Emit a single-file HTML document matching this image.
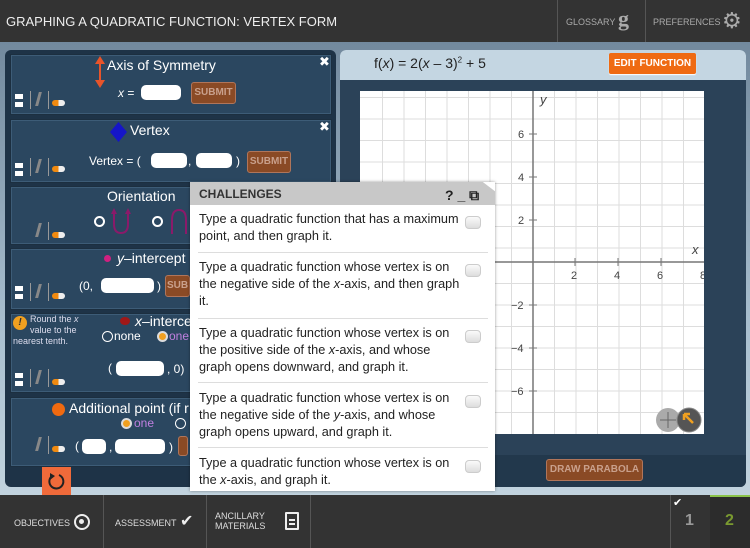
<!DOCTYPE html>
<html><head><meta charset="utf-8"><style>
*{margin:0;padding:0;box-sizing:border-box}
body{width:750px;height:548px;overflow:hidden;font-family:"Liberation Sans",sans-serif;background:linear-gradient(#6a8196,#a9bfcf 60%,#c9d9e3);position:relative}
.abs{position:absolute}
.hdr{left:0;top:0;width:750px;height:42px;background:#333;color:#ddd}
.ft{left:0;top:495px;width:750px;height:53px;background:#333;color:#ddd}
.sec{background:#2b4760;border:1px solid #1c2f40;box-shadow:inset 0 0 0 1px #3d5c77}
.w{color:#fff}
.inp{background:#fff;border-radius:5px;height:15px}
.sub{background:#8a4a25;border:1px solid #b0755a;color:#c9a08c;font-size:10px;font-weight:bold;text-align:center;border-radius:3px}
.ch{font-size:12.7px;color:#222;line-height:17px;left:199px;white-space:nowrap}
.cb{width:16px;height:13px;border-radius:4px;background:linear-gradient(#fafafa,#ddd);border:1px solid #ccc;left:465px}
.sep{left:198px;width:290px;height:1px;background:#ddd}
</style></head><body>
<div class="abs hdr"><div class="abs" style="left:6px;top:14px;font-size:13px;color:#eee">GRAPHING A QUADRATIC FUNCTION: VERTEX FORM</div>
<div class="abs" style="left:557px;top:0;width:1px;height:42px;background:#555"></div>
<div class="abs" style="left:645px;top:0;width:1px;height:42px;background:#555"></div>
<div class="abs" style="left:566px;top:17px;font-size:9px;color:#aaa">GLOSSARY</div>
<div class="abs" style="left:618px;top:6px;font-size:22px;color:#aaa;font-family:'Liberation Serif',serif;font-weight:bold">g</div>
<div class="abs" style="left:653px;top:17px;font-size:9px;color:#aaa">PREFERENCES</div>
<div class="abs" style="left:722px;top:8px;font-size:22px;color:#aaa">⚙</div>
</div>

<div class="abs" style="left:5px;top:50px;width:331px;height:437px;background:#1e3347;border-radius:6px"></div>
<div class="abs sec" style="left:10px;top:54px;width:322px;height:61px"></div>
<div class="abs sec" style="left:10px;top:119px;width:322px;height:64px"></div>
<div class="abs sec" style="left:10px;top:186px;width:322px;height:59px"></div>
<div class="abs sec" style="left:10px;top:248px;width:322px;height:62px"></div>
<div class="abs sec" style="left:10px;top:313px;width:322px;height:80px"></div>
<div class="abs sec" style="left:10px;top:397px;width:322px;height:70px"></div>

<svg class="abs" style="left:94px;top:54px" width="12" height="36"><path d="M6 4V32" stroke="#e8542a" stroke-width="2"/><path d="M1 10L6 2L11 10ZM1 26L6 34L11 26Z" fill="#e8542a"/></svg>
<div class="abs w" style="left:107px;top:57px;font-size:14px">Axis of Symmetry</div>
<div class="abs w" style="left:319px;top:54px;font-size:13px">✖</div>
<div class="abs w" style="left:118px;top:86px;font-size:12px"><i>x</i> =</div>
<div class="abs inp" style="left:141px;top:85px;width:40px"></div>
<div class="abs sub" style="left:191px;top:82px;width:45px;height:22px;line-height:20px">SUBMIT</div>

<div class="abs" style="left:110px;top:122px;width:17px;height:20px;background:#1515c8;clip-path:polygon(50% 0,100% 50%,50% 100%,0 50%)"></div>
<div class="abs w" style="left:130px;top:122px;font-size:14px">Vertex</div>
<div class="abs w" style="left:319px;top:119px;font-size:13px">✖</div>
<div class="abs w" style="left:89px;top:154px;font-size:12px">Vertex = (</div>
<div class="abs inp" style="left:151px;top:153px;width:36px"></div>
<div class="abs w" style="left:188px;top:154px;font-size:12px">,</div>
<div class="abs inp" style="left:196px;top:153px;width:36px"></div>
<div class="abs w" style="left:236px;top:154px;font-size:12px">)</div>
<div class="abs sub" style="left:247px;top:151px;width:44px;height:22px;line-height:20px">SUBMIT</div>

<div class="abs w" style="left:107px;top:188px;font-size:14px">Orientation</div>
<div class="abs" style="left:94px;top:216px;width:11px;height:11px;border-radius:50%;border:2px solid #fff"></div>
<svg class="abs" style="left:110px;top:206px" width="22" height="30"><path d="M4 4V18Q4 27 11 27Q18 27 18 18V4" fill="none" stroke="#8a1a6a" stroke-width="2"/><path d="M1 8L4 2L7 8ZM15 8L18 2L21 8Z" fill="#8a1a6a"/></svg>
<div class="abs" style="left:152px;top:216px;width:11px;height:11px;border-radius:50%;border:2px solid #fff"></div>
<svg class="abs" style="left:168px;top:206px" width="22" height="30"><path d="M4 28V14Q4 4 11 4Q18 4 18 14V28" fill="none" stroke="#8a1a6a" stroke-width="2"/></svg>

<div class="abs" style="left:104px;top:255px;width:7px;height:7px;border-radius:50%;background:#d02080"></div>
<div class="abs w" style="left:117px;top:250px;font-size:14px"><i>y</i>–intercept</div>
<div class="abs w" style="left:79px;top:279px;font-size:12px">(0,</div>
<div class="abs inp" style="left:101px;top:278px;width:53px"></div>
<div class="abs w" style="left:157px;top:279px;font-size:12px">)</div>
<div class="abs sub" style="left:165px;top:275px;width:25px;height:22px;line-height:20px">SUB</div>

<div class="abs" style="left:13px;top:316px;width:14px;height:14px;border-radius:50%;background:#f0a020;color:#333;font-size:10px;font-weight:bold;text-align:center;line-height:14px"><i>!</i></div>
<div class="abs" style="left:30px;top:314px;font-size:9px;line-height:11px;color:#dde">Round the <i>x</i></div>
<div class="abs" style="left:30px;top:325px;font-size:9px;line-height:11px;color:#dde">value to the</div>
<div class="abs" style="left:13px;top:336px;font-size:9px;line-height:11px;color:#dde">nearest tenth.</div>
<div class="abs" style="left:120px;top:317px;width:10px;height:8px;border-radius:50%;background:#a01818"></div>
<div class="abs w" style="left:135px;top:313px;font-size:14px"><i>x</i>–interce</div>
<div class="abs" style="left:102px;top:331px;width:11px;height:11px;border-radius:50%;border:1.5px solid #fff"></div>
<div class="abs w" style="left:114px;top:329px;font-size:12px">none</div>
<div class="abs" style="left:157px;top:331px;width:11px;height:11px;border-radius:50%;border:2px solid #ddd;background:#f0a020"></div>
<div class="abs" style="left:169px;top:329px;font-size:12px;color:#c080e0">one</div>
<div class="abs w" style="left:108px;top:361px;font-size:12px">(</div>
<div class="abs inp" style="left:116px;top:361px;width:48px"></div>
<div class="abs w" style="left:167px;top:362px;font-size:12px">, 0)</div>

<div class="abs" style="left:52px;top:403px;width:13px;height:13px;border-radius:50%;background:#f06a10"></div>
<div class="abs w" style="left:69px;top:400px;font-size:14px">Additional point (if r</div>
<div class="abs" style="left:121px;top:418px;width:11px;height:11px;border-radius:50%;border:2px solid #ddd;background:#f0a020"></div>
<div class="abs" style="left:134px;top:416px;font-size:12px;color:#c080e0">one</div>
<div class="abs" style="left:175px;top:418px;width:11px;height:11px;border-radius:50%;border:1.5px solid #fff"></div>
<div class="abs w" style="left:75px;top:439px;font-size:12px">(</div>
<div class="abs inp" style="left:82px;top:439px;width:24px"></div>
<div class="abs w" style="left:109px;top:440px;font-size:12px">,</div>
<div class="abs inp" style="left:115px;top:439px;width:50px"></div>
<div class="abs w" style="left:169px;top:440px;font-size:12px">)</div>
<div class="abs sub" style="left:178px;top:436px;width:10px;height:20px"></div>

<div class="abs" style="left:15px;top:94px;width:8px;height:5px;background:#fff"></div><div class="abs" style="left:15px;top:102px;width:8px;height:5px;background:#fff"></div>
<div class="abs" style="left:15px;top:163px;width:8px;height:5px;background:#fff"></div><div class="abs" style="left:15px;top:171px;width:8px;height:5px;background:#fff"></div>
<div class="abs" style="left:15px;top:286px;width:8px;height:5px;background:#fff"></div><div class="abs" style="left:15px;top:294px;width:8px;height:5px;background:#fff"></div>
<div class="abs" style="left:15px;top:373px;width:8px;height:5px;background:#fff"></div><div class="abs" style="left:15px;top:381px;width:8px;height:5px;background:#fff"></div>
<div class="abs" style="left:30px;top:91px;width:1px;height:18px;background:#999"></div><div class="abs" style="left:48px;top:91px;width:1px;height:18px;background:#999"></div>
<div class="abs" style="left:30px;top:158px;width:1px;height:18px;background:#999"></div><div class="abs" style="left:48px;top:158px;width:1px;height:18px;background:#999"></div>
<div class="abs" style="left:48px;top:222px;width:1px;height:18px;background:#999"></div>
<div class="abs" style="left:30px;top:283px;width:1px;height:18px;background:#999"></div><div class="abs" style="left:48px;top:283px;width:1px;height:18px;background:#999"></div>
<div class="abs" style="left:30px;top:369px;width:1px;height:18px;background:#999"></div><div class="abs" style="left:48px;top:369px;width:1px;height:18px;background:#999"></div>
<div class="abs" style="left:48px;top:436px;width:1px;height:18px;background:#999"></div>
<div class="abs" style="left:52px;top:100px;width:13px;height:6px;border-radius:3px;background:linear-gradient(90deg,#f08a10 50%,#eee 50%)"></div>
<div class="abs" style="left:52px;top:166px;width:13px;height:6px;border-radius:3px;background:linear-gradient(90deg,#f08a10 50%,#eee 50%)"></div>
<div class="abs" style="left:52px;top:232px;width:13px;height:6px;border-radius:3px;background:linear-gradient(90deg,#f08a10 50%,#eee 50%)"></div>
<div class="abs" style="left:52px;top:293px;width:13px;height:6px;border-radius:3px;background:linear-gradient(90deg,#f08a10 50%,#eee 50%)"></div>
<div class="abs" style="left:52px;top:379px;width:13px;height:6px;border-radius:3px;background:linear-gradient(90deg,#f08a10 50%,#eee 50%)"></div>
<div class="abs" style="left:52px;top:446px;width:13px;height:6px;border-radius:3px;background:linear-gradient(90deg,#f08a10 50%,#eee 50%)"></div>
<div class="abs" style="left:37px;top:92px;width:3px;height:14px;background:#888;transform:skew(-15deg)"></div>
<div class="abs" style="left:37px;top:159px;width:3px;height:14px;background:#888;transform:skew(-15deg)"></div>
<div class="abs" style="left:37px;top:223px;width:3px;height:14px;background:#888;transform:skew(-15deg)"></div>
<div class="abs" style="left:37px;top:284px;width:3px;height:14px;background:#888;transform:skew(-15deg)"></div>
<div class="abs" style="left:37px;top:370px;width:3px;height:14px;background:#888;transform:skew(-15deg)"></div>
<div class="abs" style="left:37px;top:437px;width:3px;height:14px;background:#888;transform:skew(-15deg)"></div>

<div class="abs" style="left:42px;top:467px;width:29px;height:28px;background:#f06a3a"></div>
<svg class="abs" style="left:42px;top:467px" width="29" height="28"><path d="M10 9A7 7 0 1 0 17 8" fill="none" stroke="#222" stroke-width="2"/><path d="M8 6L13 9L8 13Z" fill="#222"/></svg>

<div class="abs" style="left:340px;top:50px;width:406px;height:437px;background:#2b4258;border-radius:6px;overflow:hidden">
<div class="abs" style="left:0;top:0;width:406px;height:30px;background:#c4d6e2"></div>
<div class="abs" style="left:0;top:405px;width:406px;height:32px;background:#22384c"></div>
</div>
<div class="abs" style="left:374px;top:55px;font-size:14px;color:#222">f(<i>x</i>) = 2(<i>x</i> – 3)<sup style="font-size:8px">2</sup> + 5</div>
<div class="abs" style="left:609px;top:53px;width:87px;height:21px;background:#ef6a12;border-radius:2px;color:#fff;font-size:10px;font-weight:bold;text-align:center;line-height:21px;box-shadow:0 1px 1px #fff">EDIT FUNCTION</div>
<div class="abs" style="left:546px;top:459px;width:97px;height:22px;background:#8a4a25;border:1px solid #b0755a;border-radius:3px;color:#c9a08c;font-size:10px;font-weight:bold;text-align:center;line-height:20px">DRAW PARABOLA</div>

<svg class="abs" style="left:360px;top:91px" width="344" height="343" viewBox="360 91 344 343">
<rect x="360" y="91" width="344" height="343" fill="#fff"/>
<g stroke="#ddd" stroke-width="1">
<path d="M382.5 91V434M404 91V434M425.5 91V434M447 91V434M468.5 91V434M490 91V434M511.5 91V434M554.5 91V434M576 91V434M597.5 91V434M619 91V434M640.5 91V434M662 91V434M683.5 91V434"/>
<path d="M360 97.5H704M360 119H704M360 140.5H704M360 162H704M360 183.5H704M360 205H704M360 226.5H704M360 248H704M360 283.5H704M360 305H704M360 326.5H704M360 348H704M360 369.5H704M360 391H704M360 412.5H704"/>
</g>
<g stroke="#777" stroke-width="1.5"><path d="M533 91V434M360 262H704"/></g>
<g stroke="#777"><path d="M529 134h8M529 177h8M529 220h8M529 305h8M529 348h8M529 391h8M575 258v8M618 258v8M661 258v8"/></g>
<g font-family="Liberation Sans" font-size="11" fill="#444">
<text x="518" y="138">6</text><text x="518" y="181">4</text><text x="518" y="224">2</text>
<text x="511" y="309">−2</text><text x="511" y="352">−4</text><text x="511" y="395">−6</text>
<text x="571" y="279">2</text><text x="614" y="279">4</text><text x="657" y="279">6</text><text x="700" y="279">8</text>
<text x="540" y="104" font-style="italic" font-size="13">y</text><text x="692" y="254" font-style="italic" font-size="13">x</text>
</g>
<circle cx="668" cy="420" r="12" fill="#aaa"/><path d="M660 420h16M668 412v16" stroke="#666"/>
<circle cx="689" cy="420" r="12" fill="#555" stroke="#888"/><path d="M684 414l9 9M684 414v6M684 414h6" stroke="#f0a020" stroke-width="2.5"/>
</svg>

<div class="abs" style="left:190px;top:182px;width:305px;height:309px;background:#fff;box-shadow:0 0 3px rgba(0,0,0,.4)"></div>
<div class="abs" style="left:190px;top:182px;width:305px;height:23px;background:#c8c8c8;clip-path:polygon(0 0,96% 0,100% 40%,100% 100%,0 100%)"></div>
<div class="abs" style="left:199px;top:187px;font-size:12px;font-weight:bold;color:#333">CHALLENGES</div>
<div class="abs" style="left:445px;top:187px;font-size:14px;font-weight:bold;color:#222">? _ ⧉</div>
<div class="abs ch" style="top:211px">Type a quadratic function that has a maximum<br>point, and then graph it.</div>
<div class="abs cb" style="top:216px"></div><div class="abs sep" style="top:252px"></div>
<div class="abs ch" style="top:259px">Type a quadratic function whose vertex is on<br>the negative side of the <i>x</i>-axis, and then graph<br>it.</div>
<div class="abs cb" style="top:264px"></div><div class="abs sep" style="top:318px"></div>
<div class="abs ch" style="top:325px">Type a quadratic function whose vertex is on<br>the positive side of the <i>x</i>-axis, and whose<br>graph opens downward, and graph it.</div>
<div class="abs cb" style="top:330px"></div><div class="abs sep" style="top:382px"></div>
<div class="abs ch" style="top:390px">Type a quadratic function whose vertex is on<br>the negative side of the <i>y</i>-axis, and whose<br>graph opens upward, and graph it.</div>
<div class="abs cb" style="top:395px"></div><div class="abs sep" style="top:447px"></div>
<div class="abs ch" style="top:455px">Type a quadratic function whose vertex is on<br>the <i>x</i>-axis, and graph it.</div>
<div class="abs cb" style="top:460px"></div>

<div class="abs ft">
<div class="abs" style="left:103px;top:0;width:1px;height:53px;background:#555"></div>
<div class="abs" style="left:206px;top:0;width:1px;height:53px;background:#555"></div>
<div class="abs" style="left:310px;top:0;width:1px;height:53px;background:#555"></div>
<div class="abs" style="left:670px;top:0;width:1px;height:53px;background:#555"></div>
<div class="abs" style="left:710px;top:0;width:40px;height:53px;background:#2c2c2c;border-top:2px solid #8bc34a"></div>
<div class="abs" style="left:14px;top:23px;font-size:9px">OBJECTIVES</div>
<div class="abs" style="left:74px;top:19px;width:16px;height:16px;border-radius:50%;border:2.5px solid #eee"><div style="margin:3px;width:5px;height:5px;border-radius:50%;background:#eee"></div></div>
<div class="abs" style="left:115px;top:23px;font-size:9px">ASSESSMENT</div>
<div class="abs" style="left:180px;top:16px;font-size:16px;color:#eee">✔</div>
<div class="abs" style="left:215px;top:16px;font-size:9px;line-height:10px">ANCILLARY<br>MATERIALS</div>
<div class="abs" style="left:285px;top:17px;width:14px;height:18px;border:2px solid #eee;border-radius:1px"><div style="margin:5px 2px 0;height:2px;background:#eee"></div><div style="margin:2px 2px 0;height:2px;background:#eee"></div></div>
<div class="abs" style="left:673px;top:1px;font-size:11px;color:#fff">✔</div>
<div class="abs" style="left:685px;top:17px;font-size:16px;font-weight:bold;color:#999">1</div>
<div class="abs" style="left:725px;top:17px;font-size:16px;font-weight:bold;color:#7a9a30">2</div>
</div>
</body></html>
